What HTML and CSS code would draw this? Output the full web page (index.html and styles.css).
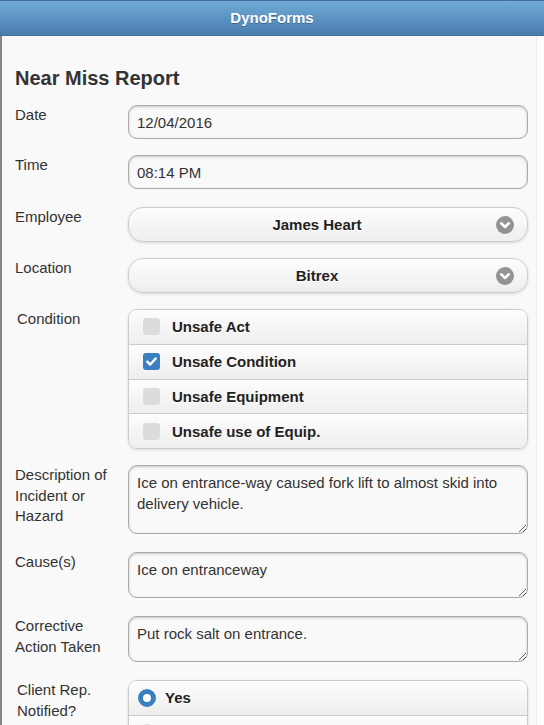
FILE: index.html
```html
<!DOCTYPE html>
<html>
<head>
<meta charset="utf-8">
<title>DynoForms</title>
<link rel="stylesheet" href="styles.css">
</head>
<body>
<header class="bar">DynoForms</header>
<div class="shell">
  <div class="page">
    <main class="content">
      <h2 class="title">Near Miss Report</h2>

      <div class="row">
        <label class="lbl">Date</label>
        <input class="txt" type="text" value="12/04/2016">
      </div>

      <div class="row row-sel">
        <label class="lbl">Time</label>
        <input class="txt" type="text" value="08:14 PM">
      </div>

      <div class="row">
        <label class="lbl">Employee</label>
        <div class="select">
          <span class="sel-text">James Heart</span>
          <span class="sel-icon"><svg viewBox="0 0 18 18" width="18" height="18"><path d="M5.2 7.3 L9 11 L12.8 7.3" fill="none" stroke="#fff" stroke-width="2.6" stroke-linecap="round" stroke-linejoin="round"/></svg></span>
        </div>
      </div>

      <div class="row">
        <label class="lbl">Location</label>
        <div class="select">
          <span class="sel-text">Bitrex</span>
          <span class="sel-icon"><svg viewBox="0 0 18 18" width="18" height="18"><path d="M5.2 7.3 L9 11 L12.8 7.3" fill="none" stroke="#fff" stroke-width="2.6" stroke-linecap="round" stroke-linejoin="round"/></svg></span>
        </div>
      </div>

      <div class="row">
        <div class="lbl lbl-legend">Condition</div>
        <div class="group">
          <div class="opt"><span class="cb"></span><span class="opt-text">Unsafe Act</span></div>
          <div class="opt"><span class="cb cb-on"><svg viewBox="0 0 18 18" width="17" height="17"><path d="M4.5 9.2 L7.6 12.2 L13.4 5.8" fill="none" stroke="#fff" stroke-width="2.6" stroke-linecap="round" stroke-linejoin="round"/></svg></span><span class="opt-text">Unsafe Condition</span></div>
          <div class="opt"><span class="cb"></span><span class="opt-text">Unsafe Equipment</span></div>
          <div class="opt"><span class="cb"></span><span class="opt-text">Unsafe use of Equip.</span></div>
        </div>
      </div>

      <div class="row row-area">
        <label class="lbl">Description of Incident or Hazard</label>
        <textarea class="area area-tall">Ice on entrance-way caused fork lift to almost skid into delivery vehicle.</textarea>
      </div>

      <div class="row row-area">
        <label class="lbl">Cause(s)</label>
        <textarea class="area">Ice on entranceway</textarea>
      </div>

      <div class="row row-area">
        <label class="lbl">Corrective Action Taken</label>
        <textarea class="area">Put rock salt on entrance.</textarea>
      </div>

      <div class="row">
        <div class="lbl lbl-legend">Client Rep. Notified?</div>
        <div class="group">
          <div class="opt opt-radio"><span class="rb rb-on"></span><span class="opt-text">Yes</span></div>
          <div class="opt opt-radio"><span class="rb"></span><span class="opt-text">No</span></div>
        </div>
      </div>
    </main>
  </div>
  <div class="gutter"></div>
</div>
</body>
</html>
```

FILE: styles.css
```css
html, body {
  margin: 0;
  padding: 0;
  background: #f9f9f9;
}

body {
  font-family: "Liberation Sans", Arial, Helvetica, sans-serif;
  font-size: 15px;
  color: #333;
}

.bar {
  height: 34px;
  line-height: 34px;
  text-align: center;
  font-weight: bold;
  font-size: 15px;
  color: #fff;
  text-shadow: 0 1px 0 #3e6790;
  background: linear-gradient(#6facd5, #497bae);
  border-top: 1px solid #456f9a;
  border-bottom: 1px solid #456f9a;
}

.shell {
  display: flex;
  min-height: 689px;
}

.page {
  flex: 1;
  border-left: 2px solid #858585;
  background: #f9f9f9;
}

.gutter {
  width: 7px;
  background: #fdfdfd;
  border-left: 1px solid #ececec;
}

.content {
  padding: 0 8px 20px 13px;
}

.title {
  margin: 30px 0 15px 0;
  font-size: 20px;
  line-height: 24px;
  font-weight: bold;
  color: #333;
}

.row {
  display: grid;
  grid-template-columns: 113px 1fr;
  align-items: start;
  margin-bottom: 16px;
}

.row-sel {
  margin-bottom: 18px;
}

.row-area {
  margin-bottom: 18px;
}

.lbl {
  line-height: 20.5px;
  color: #333;
}

.lbl-legend {
  padding-left: 2px;
}

.txt {
  box-sizing: border-box;
  width: 100%;
  height: 34px;
  margin: 0;
  padding: 0 8px;
  font-family: inherit;
  font-size: 15px;
  color: #333;
  background: #f9f9f9;
  border: 1px solid #aaa;
  border-radius: 9px;
  box-shadow: inset 0 1px 3px rgba(0, 0, 0, 0.2);
  outline: none;
}

.area {
  box-sizing: border-box;
  width: 100%;
  height: 46px;
  margin: 0;
  padding: 6px 8px;
  font-family: inherit;
  font-size: 15px;
  line-height: 21px;
  color: #333;
  background: #f9f9f9;
  border: 1px solid #aaa;
  border-radius: 9px;
  box-shadow: inset 0 1px 3px rgba(0, 0, 0, 0.2);
  outline: none;
  display: block;
  resize: vertical;
}

.area-tall {
  height: 69px;
}

.select {
  position: relative;
  box-sizing: border-box;
  height: 35px;
  display: flex;
  align-items: center;
  justify-content: center;
  padding: 0 37px 0 15px;
  border: 1px solid #ccc;
  border-radius: 15px;
  background: linear-gradient(#fdfdfd, #eee);
  box-shadow: 0 1px 3px rgba(0, 0, 0, 0.15);
  font-weight: bold;
  color: #222;
  text-shadow: 0 1px 0 #fff;
}

.sel-icon {
  position: absolute;
  right: 13px;
  top: 50%;
  margin-top: -9px;
  width: 18px;
  height: 18px;
  border-radius: 50%;
  background: rgba(0, 0, 0, 0.4);
  display: block;
}

.sel-icon svg {
  display: block;
}

.group {
  border: 1px solid #ccc;
  border-radius: 9px;
  overflow: hidden;
  box-shadow: 0 1px 3px rgba(0, 0, 0, 0.12);
}

.opt {
  height: 33.75px;
  display: flex;
  align-items: center;
  padding-left: 14px;
  background: linear-gradient(#fdfdfd, #eee);
  font-weight: bold;
  color: #222;
  text-shadow: 0 1px 0 #fff;
}

.opt + .opt {
  border-top: 1px solid #ccc;
}

.cb {
  width: 17px;
  height: 17px;
  border-radius: 3px;
  background: #dcdcdc;
  margin-right: 12px;
  display: block;
  flex: none;
}

.cb-on {
  background: #3a80c0;
}

.cb-on svg {
  display: block;
}

.opt-radio {
  padding-left: 9px;
}

.rb {
  width: 18px;
  height: 18px;
  border-radius: 50%;
  background: #dcdcdc;
  margin-right: 9px;
  display: block;
  flex: none;
  box-sizing: border-box;
}

.rb-on {
  background: #fff;
  border: 5.5px solid #3a80c0;
}
```
